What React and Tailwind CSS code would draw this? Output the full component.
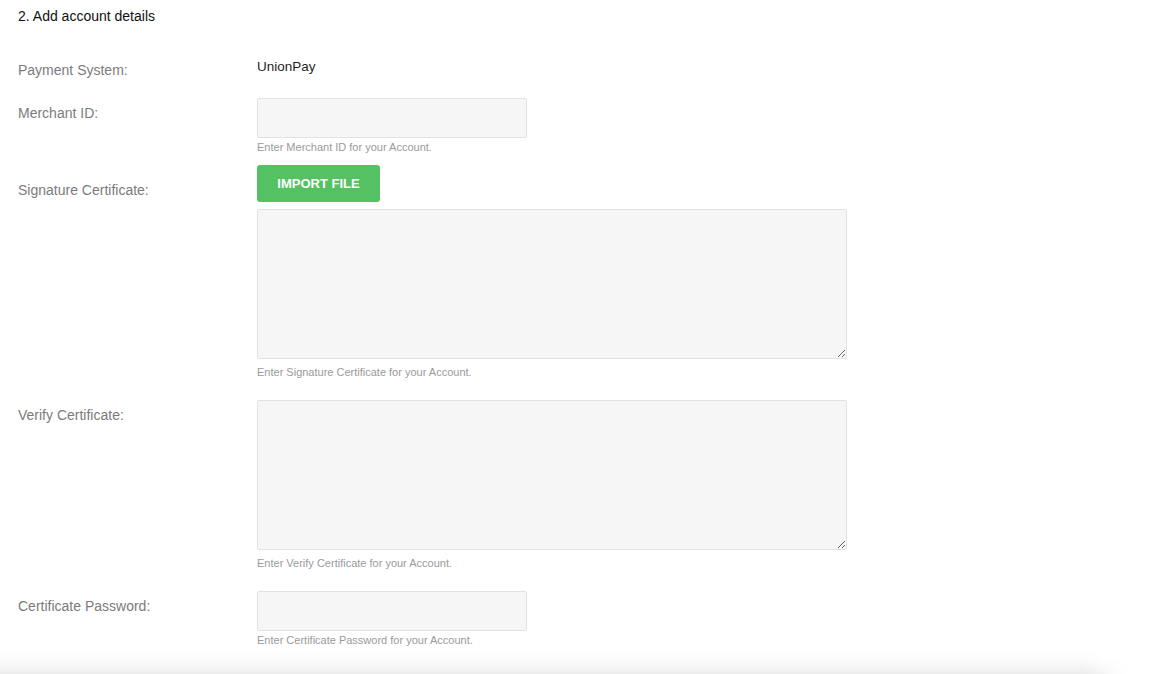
const font = { fontFamily: '"Liberation Sans", Arial, sans-serif' };

const Label = ({ children, pad = 'pt-[5px]' }) => (
  <div className={`w-[257px] shrink-0 pl-[18px] text-[14px] leading-5 text-[#7b7b7b] ${pad}`}>
    {children}
  </div>
);

const Help = ({ children, mt = 'mt-[2px]' }) => (
  <p className={`${mt} text-[11px] leading-[14px] text-[#9a9a9a]`}>{children}</p>
);

const inputCls =
  'block w-[270px] h-[40px] rounded-[2px] border border-[#e2e2e2] bg-[#f6f6f6] px-3 text-[14px] outline-none';

const areaCls =
  'block w-[590px] h-[150px] rounded-[2px] border border-[#e2e2e2] bg-[#f6f6f6] p-3 text-[13px] outline-none';

export default function App() {
  return (
    <div className="h-[674px] overflow-hidden bg-white" style={font}>
      <div className="pt-[8px] pl-[18px] text-[14px] leading-4 text-[#111]">
        2. Add account details
      </div>

      <div className="mt-[33px] flex">
        <Label pad="pt-[3px]">Payment System:</Label>
        <div className="text-[13.5px] leading-5 text-[#1f1f1f]">UnionPay</div>
      </div>

      <div className="mt-[18px] flex">
        <Label>Merchant ID:</Label>
        <div>
          <input type="text" className={inputCls} />
          <Help>Enter Merchant ID for your Account.</Help>
        </div>
      </div>

      <div className="mt-[11px] flex">
        <Label pad="pt-[15px]">Signature Certificate:</Label>
        <div>
          <button
            type="button"
            className="h-[37px] w-[123px] rounded-[3px] bg-[#54c262] text-[13px] font-bold text-white"
          >
            IMPORT FILE
          </button>
          <textarea className={`mt-[7px] ${areaCls}`} />
          <Help mt="mt-[6px]">Enter Signature Certificate for your Account.</Help>
        </div>
      </div>

      <div className="mt-[21px] flex">
        <Label>Verify Certificate:</Label>
        <div>
          <textarea className={areaCls} />
          <Help mt="mt-[6px]">Enter Verify Certificate for your Account.</Help>
        </div>
      </div>

      <div className="mt-[21px] flex">
        <Label>Certificate Password:</Label>
        <div>
          <input type="password" className={inputCls} />
          <Help>Enter Certificate Password for your Account.</Help>
        </div>
      </div>

      <div className="mt-[27px] -ml-[30px] h-[40px] w-[1140px] rounded-[20px] bg-white shadow-[0_0_26px_rgba(0,0,0,0.15)]" />
    </div>
  );
}
